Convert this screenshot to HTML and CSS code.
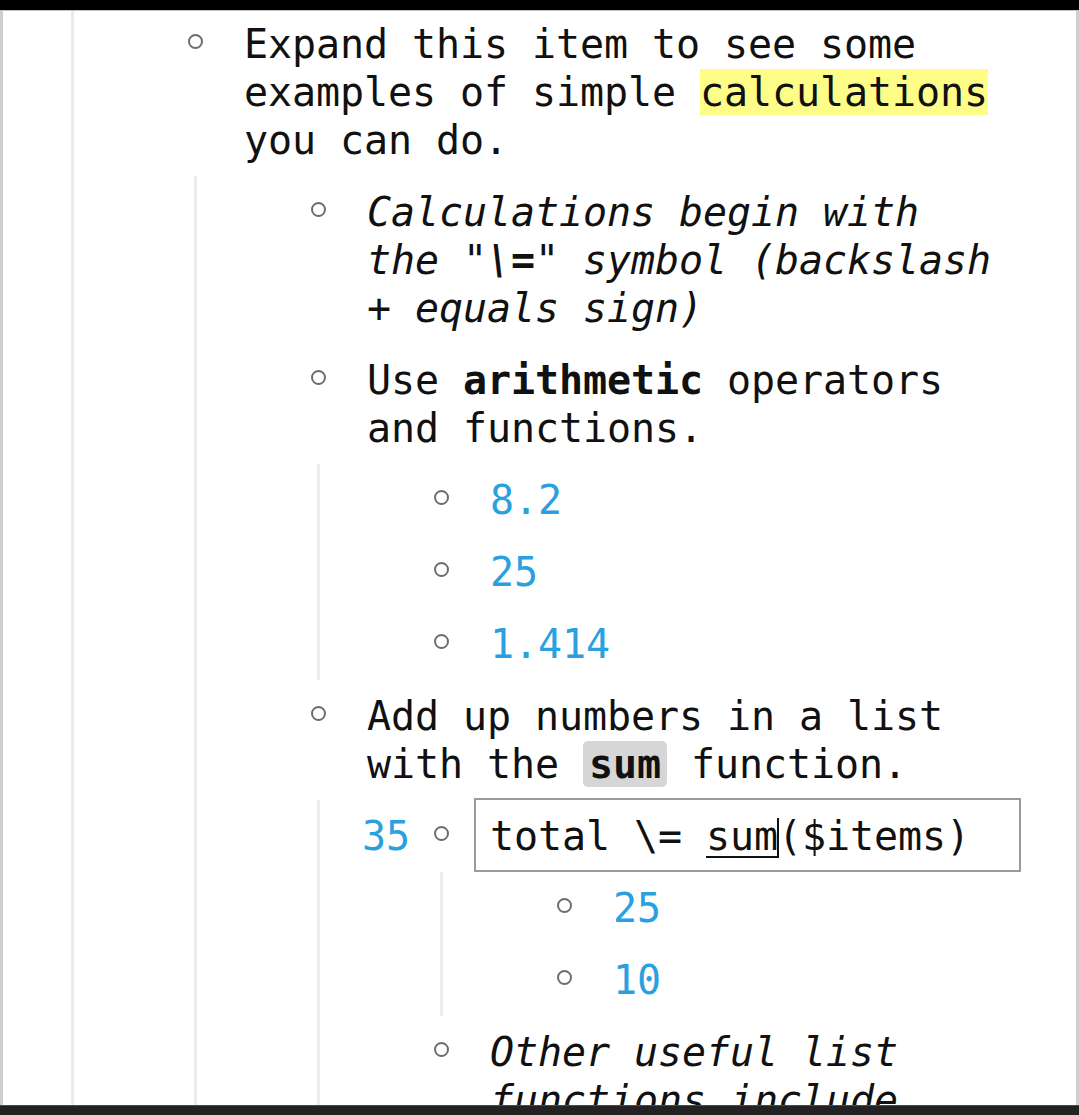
FILE: index.html
```html
<!DOCTYPE html>
<html>
<head>
<meta charset="utf-8">
<link rel="stylesheet" href="styles.css">
</head>
<body>
<div class="topbar"></div>
<div class="page">
  <div class="children root">
    <div class="item">
      <div class="row"><span class="bullet"></span><div class="text">Expand this item to see some examples of simple <span class="hl">calculations</span> you can do.</div></div>
      <div class="children">
        <div class="item">
          <div class="row"><span class="bullet"></span><div class="text em">Calculations begin with the "<b>\=</b>" symbol (backslash + equals sign)</div></div>
        </div>
        <div class="item">
          <div class="row"><span class="bullet"></span><div class="text">Use <b>arithmetic</b> operators and functions.</div></div>
          <div class="children">
            <div class="item"><div class="row"><span class="bullet"></span><div class="text num">8.2</div></div></div>
            <div class="item"><div class="row"><span class="bullet"></span><div class="text num">25</div></div></div>
            <div class="item"><div class="row"><span class="bullet"></span><div class="text num">1.414</div></div></div>
          </div>
        </div>
        <div class="item">
          <div class="row"><span class="bullet"></span><div class="text">Add up numbers in a list with the <b class="code">sum</b> function.</div></div>
          <div class="children">
            <div class="item">
              <div class="row"><span class="value">35</span><span class="bullet"></span><div class="text"><div class="editbox">total \= <span class="spell">sum</span><span class="caret"></span>($items)</div></div></div>
              <div class="children">
                <div class="item"><div class="row"><span class="bullet"></span><div class="text num">25</div></div></div>
                <div class="item"><div class="row"><span class="bullet"></span><div class="text num">10</div></div></div>
              </div>
            </div>
            <div class="item">
              <div class="row"><span class="bullet"></span><div class="text em">Other useful list functions include sum, average, min and max.</div></div>
            </div>
          </div>
        </div>
      </div>
    </div>
  </div>
</div>
<div class="bottombar"></div>
</body>
</html>
```
FILE: styles.css
```css
html, body {
  margin: 0;
  padding: 0;
  background: #ffffff;
  overflow: hidden;
}

body {
  width: 1079px;
  height: 1115px;
  font-family: "DejaVu Sans Mono", "Liberation Mono", monospace;
  font-size: 40px;
  line-height: 48px;
  letter-spacing: -0.08px;
  color: #111111;
}

.topbar {
  position: fixed;
  top: 0;
  left: 0;
  right: 0;
  height: 10px;
  background: #000000;
  border-bottom: 1px solid #c4c4c4;
  z-index: 5;
}

.bottombar {
  position: fixed;
  left: 0;
  right: 0;
  bottom: 0;
  height: 9px;
  background: #222222;
  border-top: 1px solid #4a4a4a;
  z-index: 5;
}

.page {
  box-sizing: border-box;
  width: 1079px;
  height: 1115px;
  padding: 8px 71px 0 0;
  border-left: 3px solid #cfcfcf;
  border-right: 3px solid #cfcfcf;
  overflow: hidden;
}

.children {
  margin-left: 22px;
  border-left: 3px solid #ebebeb;
  padding-left: 98px;
}

.children.root {
  margin-left: 68px;
}

.row {
  position: relative;
  display: flex;
  padding: 12px 0;
}

.bullet {
  flex: none;
  box-sizing: border-box;
  width: 72px;
  height: 48px;
  padding: 14px 0 0 16px;
}

.bullet::before {
  content: "";
  display: block;
  width: 11px;
  height: 11px;
  border: 2.5px solid #6e6e6e;
  border-radius: 50%;
}

.text {
  flex: 1;
  min-width: 0;
}

.text b {
  font-weight: bold;
}

.em {
  font-style: italic;
}

.num {
  color: #2aa0e0;
}

.hl {
  background: #fdfd88;
}

.code {
  background: #d6d6d6;
  border-radius: 5px;
  padding: 0 6px;
}

.value {
  position: absolute;
  right: calc(100% + 8px);
  top: 12px;
  color: #2aa0e0;
}

.editbox {
  margin: -14px -16px -12px;
  padding: 12px 14px 10px;
  border: 2px solid #9a9a9a;
  white-space: nowrap;
}

.spell {
  text-decoration: underline;
  text-decoration-thickness: 2px;
  text-underline-offset: 6px;
}

.caret {
  display: inline-block;
  width: 2px;
  height: 40px;
  background: #111111;
  vertical-align: -8px;
  margin-left: -1px;
  margin-right: -1px;
}
```
